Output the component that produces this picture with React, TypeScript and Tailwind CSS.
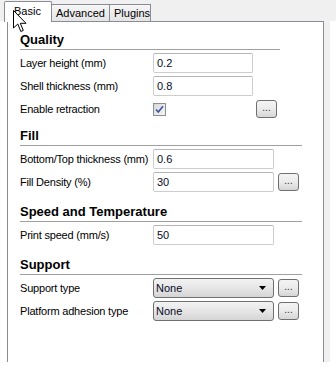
import React from 'react';

const font = { fontFamily: '"Liberation Sans", Arial, sans-serif' };

const Heading = ({ title, lineW }: { title: string; lineW: string }) => (
    <div className={`h-[19px] border-b border-[#a0a0a0] text-[13px] font-bold leading-[18px] text-black ${lineW}`}>
        {title}
    </div>
);

const Label = ({ children }: { children: React.ReactNode }) => (
    <div className="w-[133px] shrink-0 text-[11px] tracking-[-0.2px] leading-[20px] text-black whitespace-nowrap">{children}</div>
);

const TextBox = ({ value, w }: { value: string; w: string }) => (
    <div className={`h-[20px] ${w} border border-[#cdcdcd] border-t-[#b5b5b5] rounded-[2px] bg-white pl-[3px] text-[11px] leading-[18px] text-[#0a0a2a]`}>
        {value}
    </div>
);

const DotsButton = ({ ml }: { ml: string }) => (
    <div className={`${ml} w-[21px] h-[18px] border border-[#707070] rounded-[3px] bg-gradient-to-b from-[#f4f4f4] via-[#ebebeb] to-[#d6d6d6] flex items-center justify-center text-[10px] leading-none text-[#333] pb-[3px]`}>
        ...
    </div>
);

const Dropdown = ({ value }: { value: string }) => (
    <div className="relative w-[121px] h-[20px] border border-[#707070] rounded-[3px] bg-gradient-to-b from-[#f3f3f3] via-[#e6e6e6] to-[#d5d5d5] pl-[2px] text-[11px] leading-[18px] text-[#0a0a2a]">
        {value}
        <svg className="absolute right-[7px] top-[7px]" width="7" height="4" viewBox="0 0 7 4">
            <path d="M0 0H7L3.5 4Z" fill="#000" />
        </svg>
    </div>
);

const Row = ({ children }: { children: React.ReactNode }) => (
    <div className="flex items-center h-[20px]">{children}</div>
);

export default function App() {
    return (
        <div className="relative w-[336px] h-[391px] bg-white overflow-hidden" style={font}>
            {/* Tab strip */}
            <div className="h-[21px] bg-[#f0f0f0] flex items-end pl-[4px]">
                <div className="relative z-10 -mb-px h-[21px] w-[48px] bg-white border border-b-0 border-[#898c95] rounded-t-[2px] pl-[9px] pt-[2px] text-[11px] leading-[14px] text-black">
                    Basic
                </div>
                <div className="-ml-px h-[17px] w-[59px] bg-gradient-to-b from-[#f6f6f6] to-[#e4e4e4] border border-b-0 border-[#898c95] pl-[4px] pt-[1px] text-[11px] leading-[14px] text-black">
                    Advanced
                </div>
                <div className="-ml-px h-[17px] w-[42px] bg-gradient-to-b from-[#f6f6f6] to-[#e4e4e4] border border-b-0 border-[#898c95] pl-[4px] pt-[1px] text-[11px] leading-[14px] text-black">
                    Plugins
                </div>
            </div>

            {/* Panel */}
            <div className="flex pl-[7px]">
                <div className="w-[317px] h-[341px] bg-white border border-b-0 border-[#898c95] pl-[12px]">
                    <div className="mt-[9px]">
                        <Heading title="Quality" lineW="w-[260px]" />
                    </div>
                    <div className="mt-[3px] flex flex-col gap-[3px]">
                        <Row>
                            <Label>Layer height (mm)</Label>
                            <TextBox value="0.2" w="w-[100px]" />
                        </Row>
                        <Row>
                            <Label>Shell thickness (mm)</Label>
                            <TextBox value="0.8" w="w-[100px]" />
                        </Row>
                        <Row>
                            <Label>Enable retraction</Label>
                            <div className="w-[100px]">
                                <div className="w-[13px] h-[13px] border border-[#8e8f8f] bg-gradient-to-br from-[#d8d8d8] to-[#f6f6f6] flex items-center justify-center">
                                    <svg width="9" height="9" viewBox="0 0 9 9">
                                        <path d="M1 4.5L3.3 7L8 1.2" stroke="#3d55a0" strokeWidth="1.6" fill="none" />
                                    </svg>
                                </div>
                            </div>
                            <DotsButton ml="ml-[3px]" />
                        </Row>
                    </div>

                    <div className="mt-[8px]">
                        <Heading title="Fill" lineW="w-[282px]" />
                    </div>
                    <div className="mt-[3px] flex flex-col gap-[3px]">
                        <Row>
                            <Label>Bottom/Top thickness (mm)</Label>
                            <TextBox value="0.6" w="w-[121px]" />
                        </Row>
                        <Row>
                            <Label>Fill Density (%)</Label>
                            <TextBox value="30" w="w-[121px]" />
                            <DotsButton ml="ml-[4px]" />
                        </Row>
                    </div>

                    <div className="mt-[11px]">
                        <Heading title="Speed and Temperature" lineW="w-[282px]" />
                    </div>
                    <div className="mt-[3px] flex flex-col gap-[3px]">
                        <Row>
                            <Label>Print speed (mm/s)</Label>
                            <TextBox value="50" w="w-[121px]" />
                        </Row>
                    </div>

                    <div className="mt-[11px]">
                        <Heading title="Support" lineW="w-[282px]" />
                    </div>
                    <div className="mt-[3px] flex flex-col gap-[3px]">
                        <Row>
                            <Label>Support type</Label>
                            <Dropdown value="None" />
                            <DotsButton ml="ml-[4px]" />
                        </Row>
                        <Row>
                            <Label>Platform adhesion type</Label>
                            <Dropdown value="None" />
                            <DotsButton ml="ml-[4px]" />
                        </Row>
                    </div>
                </div>
                <div className="w-[6px] h-[341px] bg-[#f0f0f0]" />
            </div>

            {/* Mouse cursor */}
            <svg className="absolute left-[13px] top-[10px] z-20" width="14" height="23" viewBox="0 0 14 23">
                <path d="M0.5 0.5V18L4.8 14L7.8 21.5L10.3 20.4L7.3 13.3H13Z" fill="#fff" stroke="#000" strokeWidth="1" strokeLinejoin="miter" />
            </svg>
        </div>
    );
}
